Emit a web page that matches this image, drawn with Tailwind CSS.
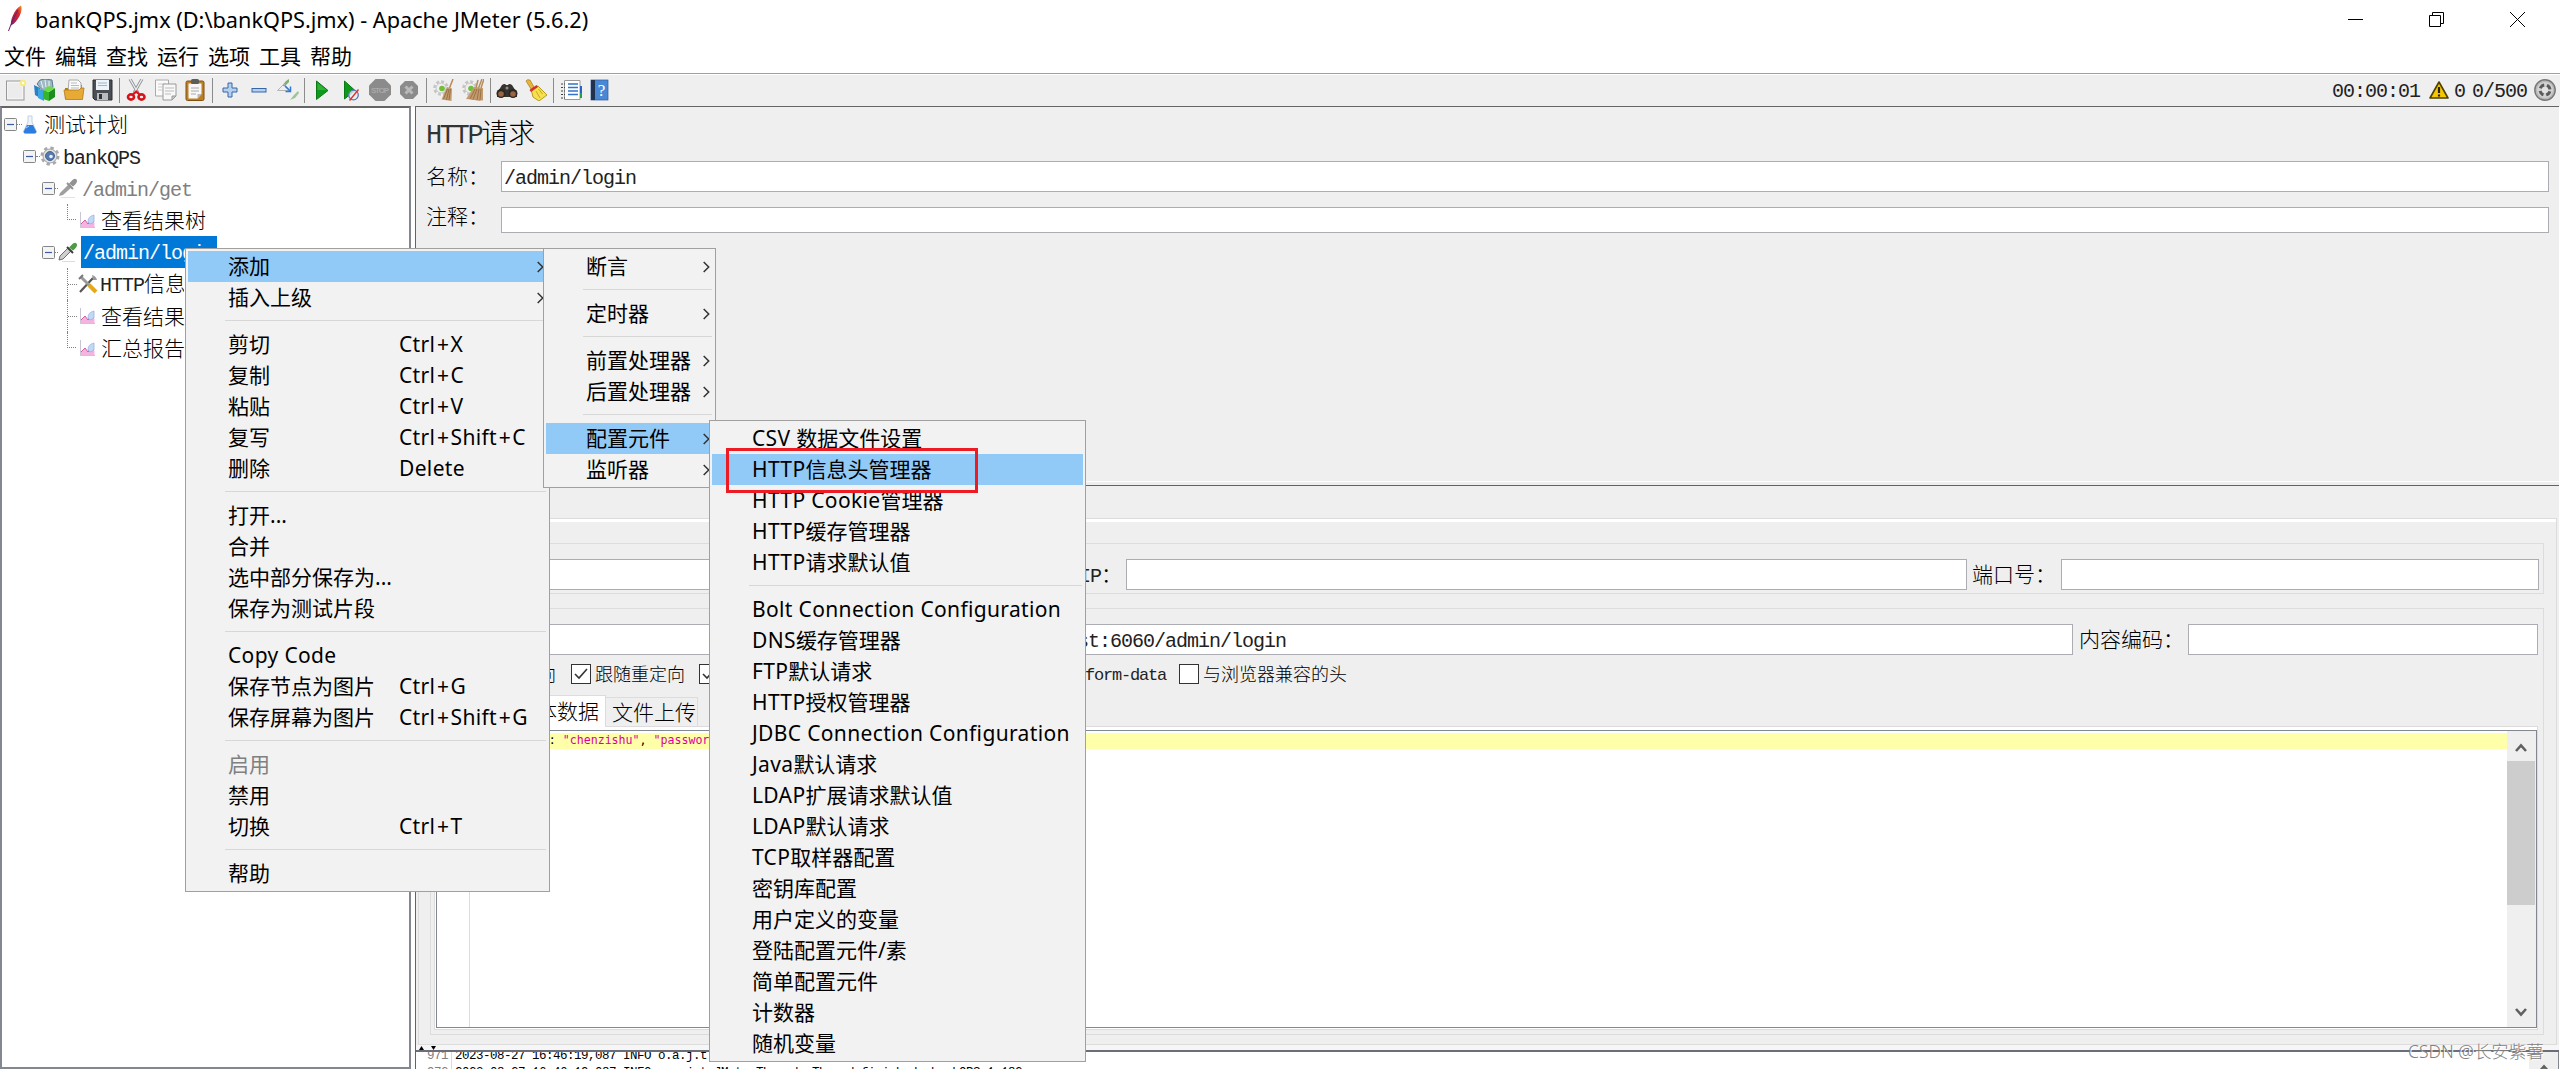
<!DOCTYPE html>
<html lang="zh-CN">
<head>
    <meta charset="UTF-8">
    <meta name="viewport" content="width=device-width, initial-scale=1.0">
    <title>bankQPS.jmx (D:\bankQPS.jmx) - Apache JMeter (5.6.2)</title>
    <script src="https://cdn.jsdelivr.net/npm/@tailwindcss/browser@4"></script>
</head>
<body class="relative w-[2560px] h-[1069px] overflow-hidden bg-white text-black text-[21px] leading-none whitespace-nowrap font-['Noto_Sans','Noto_Sans_CJK_SC',sans-serif]">
    <svg class="absolute w-0 h-0">
        <defs>
            <symbol id="i-chart" viewBox="0 0 16 18">
                <path d="M1.500 1v15.500H16" fill="none" stroke="#c9c5d2"/>
                <path d="M2 16v-3l4-4 3 4 2-3 4.500 1.500V16z" fill="#f5b3e2"/>
                <path d="M2 13l4-4 3 4 2-3" fill="none" stroke="#cf5a9e"/>
                <path d="M9 11c0-4 2-6 6-7v7l-4 2z" fill="#c3d8f5" stroke="#8fabdc" stroke-width=".7"/>
            </symbol>
            <symbol id="i-up" viewBox="0 0 12 9"><path d="M1 8l5-5.500L11 8" fill="none" stroke="#606060" stroke-width="2.600"/></symbol>
            <symbol id="i-arrow" viewBox="0 0 7 12"><path d="M.7 1l5 5-5 5" fill="none" stroke="#333" stroke-width="1.500"/></symbol>
            <symbol id="i-minus" viewBox="0 0 13 13"><rect x=".5" y=".5" width="12" height="12" rx="1" fill="#f4f4f4" stroke="#858585"/><path d="M3 6.500h7" stroke="#3c5aa8" stroke-width="1.200"/></symbol>
            <symbol id="i-broom" viewBox="0 0 22 22">
                <circle cx="8" cy="9" r="6.500" fill="#f6f6f6" stroke="#c5c5c5" stroke-width="2.500" stroke-dasharray="3 2"/>
                <circle cx="8" cy="9" r="5" fill="#eee" stroke="#c5c5c5"/>
                <circle cx="9" cy="9.500" r="2.800" fill="#6fbf3c"/>
                <path d="M20 0l-3.500 9" stroke="#b58a5c" stroke-width="1.500"/>
                <path d="M14 8l5 1.500-.5 12.500-10-1.500z" fill="#c59b6d"/>
                <path d="M14.500 10l-4 10M16 10l-2.500 11M17.500 10l-1.500 11" stroke="#8d673e" stroke-width=".8"/>
            </symbol>
            <symbol id="i-pipette" viewBox="0 0 20 20">
                <path d="M1 18l1-4 8-8 3 3-8 8z" fill="#cfcfcf" stroke="#6d6d6d"/>
                <path d="M9 5l6 6" stroke="#3c3c3c" stroke-width="2"/>
                <path d="M11 5.500l4-4q3-2 4 1 .5 2-4 6z" fill="#4f9a45"/>
                <path d="M4 19.500h13" stroke="#ddd"/>
            </symbol>
        </defs>
    </svg>

    <!-- title bar -->
    <div class="h-[42px] flex items-start justify-between">
        <div class="flex items-start">
            <svg class="ml-[7px] mt-[5px] w-4 h-[27px]" viewBox="0 0 16 27">
                <defs><linearGradient id="feather" x1="1" y1="0" x2="0" y2="1"><stop offset="0" stop-color="#f29a1c"/><stop offset=".35" stop-color="#d8232f"/><stop offset=".75" stop-color="#a3224f"/><stop offset="1" stop-color="#5b2a80"/></linearGradient></defs>
                <path d="M14 .5c2 4-1 12-7 18l-3 2c-1-5 3-16 10-20z" fill="url(#feather)"/>
                <path d="M11 5Q5 15 1.500 26" fill="none" stroke="#6b2068"/>
            </svg>
            <span class="ml-[12px] mt-[8px] text-[21.7px] leading-[24px]">bankQPS.jmx (D:\bankQPS.jmx) - Apache JMeter (5.6.2)</span>
        </div>
        <div class="flex gap-[66px] pr-[35px] mt-3">
            <svg class="w-[15px] h-[15px]" viewBox="0 0 15 15"><path d="M0 7.500h15" stroke="#000"/></svg>
            <svg class="w-[15px] h-[15px]" viewBox="0 0 15 15"><path d="M.5 3.500h11v11H.5zM3.500 3V.5h11v11H12" fill="none" stroke="#000"/></svg>
            <svg class="w-[15px] h-[15px]" viewBox="0 0 15 15"><path d="M0 0l15 15M15 0L0 15" stroke="#000"/></svg>
        </div>
    </div>

    <!-- menu bar -->
    <div class="h-8 border-b border-[#a0a0a0] flex gap-[9px] pl-[4px] leading-[28px]">
        <span>文件</span><span>编辑</span><span>查找</span><span>运行</span><span>选项</span><span>工具</span><span>帮助</span>
    </div>

    <!-- toolbar -->
    <div class="h-[32px] mt-px pb-[2px] bg-[#efefef] flex items-center justify-between">
        <div class="flex items-center pl-px [&>svg]:w-[22px] [&>svg]:h-[22px] [&>svg]:mx-[3.5px] [&>i]:w-px [&>i]:h-[25px] [&>i]:mx-[2.3px] [&>i]:bg-[#8c8c8c]">
            <svg viewBox="0 0 22 22"><rect x="1.500" y="2" width="17.500" height="19" fill="#f4f4f4" stroke="#999"/><rect x="3" y="4" width="14" height="15" fill="#ececec"/><circle cx="18" cy="4" r="3.200" fill="#f9eb7d"/><circle cx="18" cy="4" r="1.200" fill="#fff"/></svg>
            <svg viewBox="0 0 22 22"><path d="M3 5l3-4 5-1 7 1 1 7-9 5z" fill="#9fb9c4" stroke="#5c7c8c"/><path d="M7 2l2 7M11 1l1 7M15 2v6" stroke="#e8f3f7"/><path d="M0 6l6 3v10l-5-3z" fill="#2c7fc4"/><path d="M4 9l6 3v10l-6-3z" fill="#3ba7e0"/><path d="M9 11l6 2v9l-6-2z" fill="#35b52c"/><path d="M15 13l6-4v9l-6 4z" fill="#1d8d1f"/><path d="M9 11l6-4 6 2-6 4z" fill="#6bdc48"/></svg>
            <svg viewBox="0 0 22 22"><path d="M2 9h7V6h10v14H2z" fill="#b67a15"/><path d="M6 1h9l3 3v9H5z" fill="#fafafa" stroke="#aaa"/><path d="M8 4h6M8 6.500h8M8 9h8" stroke="#bbb"/><path d="M1 11h15l2-2h3l-1.500 11.500H2.500z" fill="#e6aa35" stroke="#b47a17" stroke-width=".8"/></svg>
            <svg viewBox="0 0 22 22"><path d="M1 1h19v20H3l-2-2z" fill="#4a4e55" stroke="#2b2d31"/><rect x="4" y="1" width="13" height="10" fill="#edf3f9"/><path d="M6 4h9M6 6.500h9" stroke="#9db3cc"/><rect x="5" y="14" width="11" height="7" fill="#b9bcc0"/><rect x="7" y="15" width="3" height="5" fill="#333"/></svg>
            <i></i>
            <svg viewBox="0 0 22 22"><path d="M4 0l8 14M16 0L8 14" stroke="#8e9296" stroke-width="3"/><path d="M4 0l8 14M16 0L8 14" stroke="#eceeef" stroke-width="1.300"/><ellipse cx="5" cy="18" rx="3" ry="2.600" fill="none" stroke="#d7141a" stroke-width="2.600"/><ellipse cx="15.500" cy="18" rx="3" ry="2.600" fill="none" stroke="#d7141a" stroke-width="2.600"/><path d="M7 15.500l3.200-3 3.300 3" fill="none" stroke="#d7141a" stroke-width="2.200"/></svg>
            <svg viewBox="0 0 22 22"><path d="M.5 1h13v16H.5z" fill="#fafafa" stroke="#aaa"/><path d="M3 5h8M3 8h4M3 11h4" stroke="#ccc"/><path d="M8 5h13v12l-4 4H8z" fill="#f8f8f8" stroke="#999"/><path d="M10 9h9M10 12h9M10 15h6" stroke="#bbb"/><path d="M21 17h-4v4z" fill="#ccc" stroke="#999"/></svg>
            <svg viewBox="0 0 22 22"><rect x="2" y="2" width="18" height="19.500" rx="1.500" fill="#bd7f26" stroke="#80510f"/><path d="M4.500 4.500h13V15l-4 4.500h-9z" fill="#f7f7f7"/><path d="M7 9h8M7 12h8M7 15h5" stroke="#aaa"/><path d="M13.500 19.500V15h4z" fill="#bbb"/><rect x="7" y="0" width="8" height="5" rx="1.500" fill="#5c5f56"/></svg>
            <i></i>
            <svg viewBox="0 0 22 22"><path d="M9 4h4v5h5v4h-5v5H9v-5H4V9h5z" fill="#b4d0ee" stroke="#3667a8"/></svg>
            <svg viewBox="0 0 22 22"><rect x="4" y="9.500" width="14" height="3.500" fill="#b4d0ee" stroke="#3667a8"/></svg>
            <svg viewBox="0 0 22 22"><path d="M5 7l4-5 3-2v3L8 7z" fill="#7fae76"/><path d="M6 6l-5.500 5.500H11M7 5l5 5" stroke="#b5b5b5" fill="none"/><path d="M8 7l5 5m.500-4.500v5h-5" stroke="#2f7ad8" stroke-width="1.500" fill="none"/><path d="M13 21l4-5 4-4 1 2-4 5z" fill="#9dc494"/></svg>
            <i></i>
            <svg viewBox="0 0 22 22"><path d="M5.500 2v18.500L17 11.500z" fill="#0b9a1c" stroke="#0b7a14"/><path d="M6.500 4v7h9z" fill="#4dc04d" opacity=".6"/></svg>
            <svg viewBox="0 0 22 22"><path d="M4.500 2v18L15 11.500z" fill="#0b9a1c" stroke="#0b7a14"/><circle cx="13.500" cy="16" r="4.800" fill="#e8edf6" fill-opacity=".8" stroke="#5b78b5" stroke-width="1.300"/><path d="M18.500 10.500l-9 11" stroke="#e0322b" stroke-width="1.400"/></svg>
            <svg viewBox="0 0 22 22"><path d="M6.500 0h9L22 6.500v9L15.500 22h-9L0 15.500v-9z" fill="#8b8b8b"/><text x="2" y="14" font-size="8" font-weight="700" font-family="Liberation Sans" fill="#a9a9a9" textLength="18">STOP</text></svg>
            <svg viewBox="0 0 22 22"><path d="M7 2h8l5 5v8l-5 5H7l-5-5V7z" fill="#8b8b8b"/><path d="M7.500 7.500l7 7m0-7l-7 7" stroke="#b9b9b9" stroke-width="3"/></svg>
            <i></i>
            <svg viewBox="0 0 22 22"><use href="#i-broom"/></svg>
            <svg viewBox="0 0 22 22"><use href="#i-broom"/><path d="M22 0l-3 9M16 1l-2 8" stroke="#b58a5c" stroke-width="1.500"/><path d="M12 8l9 1v12.500L4 20z" fill="#c59b6d"/><path d="M13 10L8 20M15 10l-4 10.500M17 10l-2 11M19 10l-1 11" stroke="#8d673e" stroke-width=".8"/></svg>
            <i></i>
            <svg viewBox="0 0 22 22"><path d="M6 6q3-2 4 0h2q1-2 4 0l5 8v4H1v-4z" fill="#37332f"/><circle cx="5" cy="14.500" r="4.500" fill="#2a2725"/><circle cx="17" cy="14.500" r="4.500" fill="#2a2725"/><circle cx="5" cy="15" r="2.800" fill="#9a6540"/><circle cx="17" cy="15" r="2.800" fill="#9a6540"/><circle cx="11" cy="9" r="1.500" fill="#8c8c8c"/></svg>
            <svg viewBox="0 0 22 22"><path d="M1 2q1-2 4-1l4 7-3 2z" fill="#e5b53e" stroke="#a97d19" stroke-width=".7"/><path d="M6 10l7-3 9 9-8 6-6-4z" fill="#f7e04d" stroke="#b79a22"/><path d="M4.500 11l7-5 1.500 2-7 5z" fill="#d4302a"/><path d="M11 12l4 7M13.500 10l4 5" stroke="#c9a927"/></svg>
            <i></i>
            <svg viewBox="0 0 22 22"><path d="M4.500 1.500h15.500v19H4.500z" fill="#fff" stroke="#9a9a9a"/><path d="M8 5h10M8 8.500h10M8 12h10M8 15.500h10" stroke="#3373c9" stroke-width="1.300"/><path d="M1 5h4M1 8.500h4M1 12h4M1 15.500h4M1 19h4" stroke="#444" stroke-dasharray="2 1"/><path d="M21 7v7" stroke="#2563c9" stroke-width="2"/><path d="M21 14v5" stroke="#22a52a" stroke-width="2"/></svg>
            <svg viewBox="0 0 22 22"><rect x="2" y="1" width="17" height="20" fill="#4a87d4" stroke="#2a5ca0" stroke-width=".7"/><rect x="2" y="1" width="4" height="20" fill="#20324d"/><text x="12.500" y="16.500" text-anchor="middle" font-size="17" font-family="Liberation Serif" fill="#fff">?</text></svg>
        </div>
        <div class="flex items-center pr-1 font-['Liberation_Mono',monospace] text-[20px] tracking-[-1px] text-[#222] [&>span]:pt-[3px]">
            <span class="w-[97px]">00:00:01</span>
            <svg class="w-[20px] h-[18px] mr-[5px]" viewBox="0 0 20 18"><path d="M10 1l9 16H1z" fill="#f7c600" stroke="#4e4100" stroke-width="1.600" stroke-linejoin="round"/><path d="M10 6v6M10 13.500v2" stroke="#222" stroke-width="2.200"/></svg>
            <span class="w-[18px]">0</span>
            <span class="w-[62px]">0/500</span>
            <svg class="w-[22px] h-[22px]" viewBox="0 0 22 22"><circle cx="11" cy="11" r="10.200" fill="#b9b9b9" stroke="#777" stroke-width="1.400"/><circle cx="11" cy="11" r="8" fill="#d2d2d2"/><circle cx="11" cy="11" r="5" fill="none" stroke="#5a5a5a" stroke-width="3" stroke-dasharray="5 2.850" stroke-dashoffset="-1.400"/><circle cx="11" cy="11" r="3" fill="#e2e2e2"/></svg>
        </div>
    </div>

    <div class="flex h-[963px] -mt-px">
        <!-- tree -->
        <div class="w-[411px] border-2 border-t-[#646464] border-[#828790] bg-white font-light text-[21px]">
            <div class="flex items-center h-8 pl-[2px]">
                <svg class="w-[13px] h-[13px]"><use href="#i-minus"/></svg>
                <span class="w-[5px] border-t border-dotted border-[#808080]"></span>
                <svg class="w-[16px] h-[19px]" viewBox="0 0 16 19"><path d="M6 1h4v6l4.500 9.500q0 1.500-2 1.500h-9q-2 0-2-1.500L6 7z" fill="#eef5fc" stroke="#c4d0dd"/><path d="M5 10h6l3.500 7q-1 1.500-2 1.500h-9Q2 18.500 1.500 17z" fill="#2b7de0"/><path d="M4 13l3-2" stroke="#a8d2f7"/></svg>
                <span class="ml-[6px]">测试计划</span>
            </div>
            <div class="flex items-center h-8 pl-[21px]">
                <svg class="w-[13px] h-[13px]"><use href="#i-minus"/></svg>
                <span class="w-[4px] border-t border-dotted border-[#808080]"></span>
                <svg class="w-[20px] h-[20px]" viewBox="0 0 20 20"><circle cx="10" cy="10" r="8" fill="none" stroke="#a8a8a8" stroke-width="3" stroke-dasharray="3.300 3"/><circle cx="10" cy="10" r="7" fill="#e2e2e2" stroke="#a5a5a5"/><circle cx="10" cy="10" r="4.500" fill="#5578b0" stroke="#4a6698"/><circle cx="11" cy="10.500" r="1.800" fill="#e8f0fa"/></svg>
                <span class="ml-[3px] pt-[5px] font-['Liberation_Mono',monospace] text-[20px] tracking-[-1px] font-normal text-[#222]">bankQPS</span>
            </div>
            <div class="flex items-center h-8 pl-[40px]">
                <svg class="w-[13px] h-[13px]"><use href="#i-minus"/></svg>
                <span class="w-[3px] border-t border-dotted border-[#808080]"></span>
                <svg class="w-[20px] h-[20px] opacity-80" viewBox="0 0 20 20"><path d="M1 18l1-3 9-9 3 3-9 8z" fill="#888"/><path d="M9 5l6 6" stroke="#777" stroke-width="2"/><path d="M11 5.500l4-4q3-2 4 1 .5 2-4 6z" fill="#777"/><path d="M3 19.500h14" stroke="#ddd"/></svg>
                <span class="ml-[4px] pt-[5px] font-['Liberation_Mono',monospace] text-[20px] tracking-[-1px] font-normal text-[#808080]">/admin/get</span>
            </div>
            <div class="flex items-center h-8 pl-[65px]">
                <span class="h-4 w-[9px] mb-4 border-l border-b border-dotted border-[#808080]"></span>
                <svg class="w-4 h-[18px] ml-[3px]"><use href="#i-chart"/></svg>
                <span class="ml-[6px]">查看结果树</span>
            </div>
            <div class="flex items-center h-8 pl-[40px]">
                <svg class="w-[13px] h-[13px]"><use href="#i-minus"/></svg>
                <span class="w-[3px] border-t border-dotted border-[#808080]"></span>
                <svg class="w-[20px] h-[20px]"><use href="#i-pipette"/></svg>
                <span class="ml-[3px] h-8 w-[136px] pl-[2px] leading-[36px] bg-[#0078d7] text-white font-['Liberation_Mono',monospace] text-[20px] tracking-[-1px] font-normal">/admin/login</span>
            </div>
            <div class="flex items-center h-8 pl-[65px]">
                <span class="h-8 border-l border-dotted border-[#808080]"></span>
                <span class="w-[9px] border-t border-dotted border-[#808080]"></span>
                <svg class="w-[20px] h-[20px] ml-px" viewBox="0 0 20 20"><path d="M2 18L15 4" stroke="#555" stroke-width="2.200"/><path d="M14 1q4 1 5 5l-4 0z" fill="#999"/><path d="M3 3l9 9" stroke="#9a9a9a" stroke-width="3"/><path d="M11 11l7 7" stroke="#e2a91b" stroke-width="4"/><path d="M1 5l4-4" stroke="#777" stroke-width="2"/></svg>
                <span class="ml-[2px] w-[84px] overflow-hidden leading-8"><span class="font-['Liberation_Mono',monospace] text-[20px] tracking-[-1px] font-normal text-[#222]">HTTP</span>信息</span>
            </div>
            <div class="flex items-center h-8 pl-[65px]">
                <span class="h-8 border-l border-dotted border-[#808080]"></span>
                <span class="w-[9px] border-t border-dotted border-[#808080]"></span>
                <svg class="w-4 h-[18px] ml-[2px]"><use href="#i-chart"/></svg>
                <span class="ml-[6px]">查看结果</span>
            </div>
            <div class="flex items-center h-8 pl-[65px]">
                <span class="h-4 w-[9px] mb-4 border-l border-b border-dotted border-[#808080]"></span>
                <svg class="w-4 h-[18px] ml-[3px]"><use href="#i-chart"/></svg>
                <span class="ml-[6px]">汇总报告</span>
            </div>
        </div>

        <!-- sampler panel -->
        <div class="flex-1 ml-[4px] mr-px border-l border-[#646464] bg-[#efefef] flex flex-col font-light">
            <div class="h-[376px] border-t border-[#646464] border-b border-b-white pl-[10px] pr-[10px] shrink-0">
                <h1 class="h-[54px] leading-[52px] text-[27px]"><span class="font-['Liberation_Mono',monospace] text-[27px] tracking-[-2.4px] font-normal text-[#333]">HTTP</span>请求</h1>
                <div class="flex items-center h-[31px]">
                    <label class="w-[75px]">名称：</label>
                    <div class="flex-1 h-[31px] leading-[33px] pl-[2px] border border-[#abadb3] bg-white font-['Liberation_Mono',monospace] text-[20px] tracking-[-1px] font-normal text-[#222]">/admin/login</div>
                </div>
                <div class="flex items-center h-[26px] mt-[15px]">
                    <label class="w-[75px] -mt-[8px]">注释：</label>
                    <div class="flex-1 h-[26px] border border-[#abadb3] bg-white"></div>
                </div>
            </div>

            <div class="mt-[3px] h-[560px] shrink-0 border-t border-[#646464] pt-[32px] pl-[2px] pr-[2px]">
                <div class="h-[527px] border border-[#dcdcdc]">
                    <div class="h-[525px] border-t-[3px] border-t-white pl-[11px] pr-[12px] pt-[21px]">
                        <div class="h-[51px] border border-[#dcdcdc] pt-[15px] pl-[89px] pr-[4px] flex">
                            <div class="w-[320px] h-[31px] border border-[#abadb3] bg-white"></div>
                            <label class="w-[286px] leading-[31px] text-right pr-[4px]">服务器名称或<span class="font-['Liberation_Mono',monospace] text-[20px] tracking-[-1px] font-normal text-[#222]">IP</span>：</label>
                            <div class="w-[841px] h-[31px] border border-[#abadb3] bg-white"></div>
                            <label class="w-[94px] pl-[5px] leading-[31px]">端口号：</label>
                            <div class="flex-1 h-[31px] border border-[#abadb3] bg-white"></div>
                        </div>
                        <div class="h-[427px] mt-[14px] border border-[#dcdcdc] pt-[15px] pl-[3px] pr-[5px]">
                            <div class="flex pl-[86px]">
                                <div class="w-[1553px] h-[31px] leading-[33px] pl-[402px] border border-[#abadb3] bg-white font-['Liberation_Mono',monospace] text-[20px] tracking-[-1px] font-normal text-[#222]">http://localhost:6060/admin/login</div>
                                <label class="w-[115px] pl-[6px] leading-[31px]">内容编码：</label>
                                <div class="flex-1 h-[31px] border border-[#abadb3] bg-white"></div>
                            </div>
                            <div class="flex items-center h-[20px] mt-[9px] pl-[104px] text-[18px]">
                                <span class="w-[33px]">向</span>
                                <svg class="w-5 h-5" viewBox="0 0 20 20"><rect x=".5" y=".5" width="19" height="19" fill="#fff" stroke="#333"/><path d="M4 10l4 4 8-9" fill="none" stroke="#333" stroke-width="1.600"/></svg>
                                <span class="ml-[4px] w-[104px]">跟随重定向</span>
                                <svg class="w-5 h-5" viewBox="0 0 20 20"><rect x=".5" y=".5" width="19" height="19" fill="#fff" stroke="#333"/><path d="M4 10l4 4 8-9" fill="none" stroke="#333" stroke-width="1.600"/></svg>
                                <span class="w-[447px] pt-[3px] text-right font-['Liberation_Mono',monospace] text-[17px] tracking-[-1.2px] font-normal text-[#222]">form-data</span>
                                <svg class="w-5 h-5 ml-[13px]" viewBox="0 0 20 20"><rect x=".5" y=".5" width="19" height="19" fill="#fff" stroke="#333"/></svg>
                                <span class="ml-[4px]">与浏览器兼容的头</span>
                            </div>
                            <div class="flex items-end h-[31px] mt-[11px] pl-[56px]">
                                <div class="h-[32px] w-[116px] -mb-px border border-b-0 border-[#dcdcdc] bg-white leading-[30px] text-right pr-[6px]">消息体数据</div>
                                <div class="h-[29px] w-[92px] border border-l-0 border-b-0 border-[#dcdcdc] leading-[28px] pl-[6px]">文件上传</div>
                            </div>
                            <div class="h-[304px] border border-[#dcdcdc] bg-white pl-[1px] pb-[1px] pt-[3px]">
                                <div class="h-[298px] border border-[#828790] flex bg-white">
                                    <div class="w-[32px]"></div>
                                    <div class="w-px bg-[#dcdcdc]"></div>
                                    <div class="flex-1 pt-[2px]">
                                        <div class="h-4 leading-[15px] bg-[#ffffaa] pl-[2px] font-['DejaVu_Sans_Mono',monospace] text-[11.6px] font-normal text-[#dc009c]">{"username"<span class="text-black">: </span>"chenzishu"<span class="text-black">, </span>"password"</div>
                                    </div>
                                    <div class="w-[29px] pr-px bg-[#efefef] flex flex-col items-center">
                                        <svg class="w-3 h-[9px] mt-[12px]"><use href="#i-up"/></svg>
                                        <div class="w-full h-[144px] mt-[9px] bg-[#cdcdcd]"></div>
                                        <svg class="w-3 h-[9px] mt-[103px] rotate-180"><use href="#i-up"/></svg>
                                    </div>
                                </div>
                            </div>
                        </div>
                    </div>
                </div>
            </div>

            <div class="h-[5px] shrink-0 bg-[#f6f6f6] flex items-center">
                <svg class="w-5 h-[5px] ml-[3px]" viewBox="0 0 20 5"><path d="M0 5h5L2.500 1zM12 1h5l-2.500 4z" fill="#000"/></svg>
            </div>
            <!-- log -->
            <div class="flex-1 min-h-0 overflow-hidden border-t-2 border-[#6b6d78] bg-white flex font-['Liberation_Mono',monospace] text-[12.5px] tracking-[-0.5px] font-normal leading-[17px]">
                <div class="w-[36px] -mt-[4px] pl-[11px] border-r border-[#dcdcdc] text-[#808080]">971<br>972</div>
                <div class="flex-1 -mt-[4px] pl-[3px]">2023-08-27 16:46:19,087 INFO o.a.j.t<br>2023-08-27 16:46:19,087 INFO o.a.j.t.JMeterThread: Thread finished: bankQPS 1-182</div>
                <div class="w-[30px] bg-[#efefef] border-r border-[#828790] flex justify-center"><svg class="w-3 h-[9px] mt-[12px]"><use href="#i-up"/></svg></div>
            </div>
        </div>
    </div>

    <!-- popup menus -->
    <div id="menu-main" class="absolute left-[185px] top-[248px] w-[365px] border border-[#a0a0a0] bg-[#f2f2f2] p-[2px]"></div>
    <div id="menu-add" class="absolute left-[543px] top-[248px] w-[173px] border border-[#a0a0a0] bg-[#f2f2f2] p-[2px]"></div>
    <div id="menu-config" class="absolute left-[709px] top-[420px] w-[377px] border border-[#a0a0a0] bg-[#f2f2f2] p-[2px]"></div>
    <div class="absolute left-[726px] top-[448px] w-[252px] h-[45px] border-[3px] border-[#ed1c24]"></div>

    <div class="absolute left-[2408px] top-[1041px] text-[17.5px] leading-5 font-light text-[#808080] [text-shadow:1px_1px_0_#fff]">CSDN @长安紫薯</div>

    <script>
        // '-' is a separator, '>' marks an item with a submenu
        const menus = {
            'menu-main': [
                ['添加', '>', 'on'], ['插入上级', '>'], '-',
                ['剪切', 'Ctrl+X'], ['复制', 'Ctrl+C'], ['粘贴', 'Ctrl+V'], ['复写', 'Ctrl+Shift+C'], ['删除', 'Delete'], '-',
                ['打开...'], ['合并'], ['选中部分保存为...'], ['保存为测试片段'], '-',
                ['Copy Code'], ['保存节点为图片', 'Ctrl+G'], ['保存屏幕为图片', 'Ctrl+Shift+G'], '-',
                ['启用', '', 'off'], ['禁用'], ['切换', 'Ctrl+T'], '-', ['帮助']
            ],
            'menu-add': [
                ['断言', '>'], '-', ['定时器', '>'], '-', ['前置处理器', '>'], ['后置处理器', '>'], '-',
                ['配置元件', '>', 'on'], ['监听器', '>']
            ],
            'menu-config': [
                ['CSV 数据文件设置'], ['HTTP信息头管理器', '', 'on'], ['HTTP Cookie管理器'], ['HTTP缓存管理器'], ['HTTP请求默认值'], '-',
                ['Bolt Connection Configuration'], ['DNS缓存管理器'], ['FTP默认请求'], ['HTTP授权管理器'],
                ['JDBC Connection Configuration'], ['Java默认请求'], ['LDAP扩展请求默认值'], ['LDAP默认请求'],
                ['TCP取样器配置'], ['密钥库配置'], ['用户定义的变量'], ['登陆配置元件/素'], ['简单配置元件'], ['计数器'], ['随机变量']
            ]
        };
        const arrow = '<svg class="w-[7px] h-[12px] mr-[3px] ml-auto"><use href="#i-arrow"/></svg>';
        const latin = text => text.replace(/[A-Za-z][A-Za-z ]+/g, '<span class="tracking-[0.35px]">$&</span>');

        for (const id in menus) {
            document.getElementById(id).innerHTML = menus[id].map(item => {
                if (item === '-') return '<div class="h-4 pt-[7px] pl-[37px] pr-px"><div class="h-px bg-[#d7d7d7]"></div></div>';
                const [label, key, state] = item;
                const bg = state === 'on' ? 'bg-[#91c9f7]' : state === 'off' ? 'text-[#808080]' : '';
                const keys = latin(key || '').replace(/\+/g, '<span class="mx-[1.6px]">+</span>');
                const right = key === '>' ? arrow : `<span>${keys}</span>`;
                const width = key && key !== '>' ? 'w-[171px]' : '';
                return `<div class="flex items-center h-[31px] pl-[40px] leading-[31px] ${bg}"><span class="${width}">${latin(label)}</span>${right}</div>`;
            }).join('');
        }
    </script>
</body>
</html>
